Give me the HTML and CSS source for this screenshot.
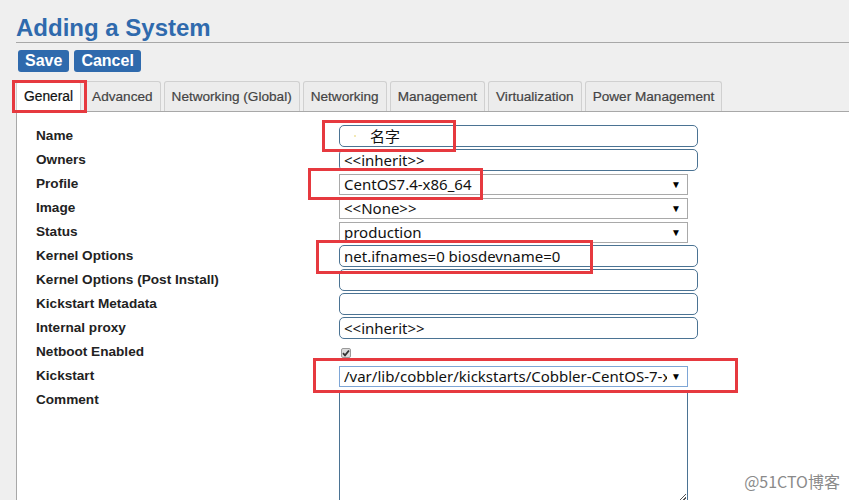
FILE: index.html
```html
<!DOCTYPE html>
<html>
<head>
<meta charset="utf-8">
<link rel="stylesheet" href="styles.css">
</head>
<body>
<div class="page">
  <h1 class="title">Adding a System</h1>
  <div class="actions">
    <button class="btn">Save</button>
    <button class="btn">Cancel</button>
  </div>
  <ul class="tabs">
    <li class="tab active">General</li>
    <li class="tab">Advanced</li>
    <li class="tab">Networking (Global)</li>
    <li class="tab">Networking</li>
    <li class="tab">Management</li>
    <li class="tab">Virtualization</li>
    <li class="tab">Power Management</li>
  </ul>
  <div class="panel">
    <div class="row"><span class="label">Name</span><div class="text name-input"><span class="dot"></span><span class="cjk">名字</span></div></div>
    <div class="row"><span class="label">Owners</span><div class="text">&lt;&lt;inherit&gt;&gt;</div></div>
    <div class="row"><span class="label">Profile</span><div class="select"><span class="val">CentOS7.4-x86_64</span><span class="arrow">▼</span></div></div>
    <div class="row"><span class="label">Image</span><div class="select"><span class="val">&lt;&lt;None&gt;&gt;</span><span class="arrow">▼</span></div></div>
    <div class="row"><span class="label">Status</span><div class="select"><span class="val">production</span><span class="arrow">▼</span></div></div>
    <div class="row"><span class="label">Kernel Options</span><div class="text">net.ifnames=0 biosdevname=0</div></div>
    <div class="row"><span class="label">Kernel Options (Post Install)</span><div class="text"></div></div>
    <div class="row"><span class="label">Kickstart Metadata</span><div class="text"></div></div>
    <div class="row"><span class="label">Internal proxy</span><div class="text">&lt;&lt;inherit&gt;&gt;</div></div>
    <div class="row"><span class="label">Netboot Enabled</span><span class="check"><svg width="8" height="8" viewBox="0 0 8 8"><path d="M1 4.2 L3 6.3 L7 1.5" fill="none" stroke="#333" stroke-width="1.8"/></svg></span></div>
    <div class="row"><span class="label">Kickstart</span><div class="select focus"><span class="val">/var/lib/cobbler/kickstarts/Cobbler-CentOS-7-x86_64.ks</span><span class="arrow">▼</span></div></div>
    <div class="row top"><span class="label">Comment</span><div class="textarea"><span class="grip"></span></div></div>
  </div>
  <div class="mark m-general"></div>
  <div class="mark m-name"></div>
  <div class="mark m-profile"></div>
  <div class="mark m-kernel"></div>
  <div class="mark m-kick"></div>
  <div class="watermark">@51CTO博客</div>
</div>
</body>
</html>
```

FILE: styles.css
```css
html, body {
  margin: 0;
  padding: 0;
  height: 100%;
  overflow: hidden;
}
body {
  background: #efefef;
  font-family: "Liberation Sans", Arial, sans-serif;
}
.page {
  position: relative;
  height: 500px;
  padding-left: 16px;
  display: flex;
  flex-direction: column;
}
.title {
  margin: 14px 0 0 0;
  padding: 0;
  height: 28px;
  line-height: 28px;
  font-size: 24px;
  font-weight: bold;
  color: #2f6aad;
  border-bottom: 1px solid #a8a8a8;
}
.actions {
  display: flex;
  gap: 5px;
  margin: 7px 0 0 2px;
}
.btn {
  height: 22px;
  padding: 0 7px;
  border: none;
  border-radius: 3px;
  background: #2f6aad;
  color: #fff;
  font-family: "Liberation Sans", Arial, sans-serif;
  font-weight: bold;
  font-size: 16px;
  line-height: 22px;
}
.tabs {
  list-style: none;
  margin: 9px 0 0 0;
  padding: 0;
  display: flex;
  align-items: flex-end;
  gap: 3px;
  height: 30px;
}
.tab {
  box-sizing: border-box;
  height: 30px;
  padding: 0 7px;
  border: 1px solid #d0d0d0;
  border-bottom: none;
  border-radius: 3px 3px 0 0;
  background: #ececec;
  color: #444;
  font-size: 13.6px;
  line-height: 29px;
  -webkit-text-stroke: 0.2px #444;
}
.tab.active {
  position: relative;
  z-index: 1;
  height: 31px;
  margin-bottom: -1px;
  background: #fff;
  color: #111;
  font-size: 13.8px;
  -webkit-text-stroke: 0.2px #111;
}
.panel {
  flex: 1;
  background: #fff;
  border-top: 1px solid #a8a8a8;
  border-left: 1px solid #a8a8a8;
  padding: 12px 0 0 19px;
}
.row {
  display: grid;
  grid-template-columns: 303px auto;
  height: 24px;
  align-items: center;
}
.row.top {
  align-items: start;
}
.label {
  font-size: 13.6px;
  font-weight: bold;
  color: #222;
  line-height: 24px;
}
.text {
  box-sizing: border-box;
  width: 359px;
  height: 22px;
  border: 1px solid #4b7393;
  border-radius: 5px;
  background: #fff;
  padding-left: 4px;
  font-family: "Noto Sans", sans-serif;
  font-size: 15px;
  line-height: 20px;
  color: #111;
  white-space: nowrap;
  overflow: hidden;
}
.name-input {
  display: flex;
  align-items: center;
}
.dot {
  width: 2px;
  height: 2px;
  background: #f3e9b5;
  margin: 0 14px 0 10px;
}
.cjk {
  font-family: "Noto Sans CJK SC", sans-serif;
  font-size: 15px;
}
.select {
  box-sizing: border-box;
  width: 349px;
  height: 21px;
  border: 1px solid #a9a9a9;
  background: #fff;
  display: flex;
  align-items: center;
  padding: 0 6px 0 4px;
  font-family: "Noto Sans", sans-serif;
  font-size: 15px;
  color: #111;
}
.select.focus {
  border-color: #7ea6d6;
}
.val {
  flex: 1;
  white-space: nowrap;
  overflow: hidden;
  line-height: 19px;
}
.arrow {
  font-size: 10px;
  margin-left: 4px;
  color: #000;
}
.check {
  box-sizing: border-box;
  width: 10px;
  height: 10px;
  margin: 1px 0 0 2px;
  border: 1px solid #9a9a9a;
  border-radius: 2px;
  background: #dcdcdc;
  display: flex;
  align-items: center;
  justify-content: center;
}
.textarea {
  position: relative;
  box-sizing: border-box;
  width: 349px;
  height: 114px;
  margin-top: 2px;
  border: 1px solid #4b7393;
  border-bottom: none;
  background: #fff;
}
.grip {
  position: absolute;
  right: 1px;
  bottom: 3px;
  width: 7px;
  height: 7px;
  background: linear-gradient(135deg, transparent 45%, #555 45%, #555 55%, transparent 55%, transparent 70%, #555 70%, #555 80%, transparent 80%);
}
.mark {
  position: absolute;
  box-sizing: border-box;
  border: 3px solid #e6393f;
  z-index: 2;
}
.m-general { left: 12px; top: 80px; width: 75px; height: 33px; }
.m-name { left: 322px; top: 120px; width: 134px; height: 32px; }
.m-profile { left: 308px; top: 168px; width: 175px; height: 32px; }
.m-kernel { left: 316px; top: 240px; width: 277px; height: 34px; }
.m-kick { left: 313px; top: 358px; width: 425px; height: 35px; }
.watermark {
  position: absolute;
  right: 9px;
  bottom: 7px;
  font-family: "Noto Sans CJK SC", sans-serif;
  font-size: 16px;
  color: #8a8a8a;
  z-index: 2;
}
```
